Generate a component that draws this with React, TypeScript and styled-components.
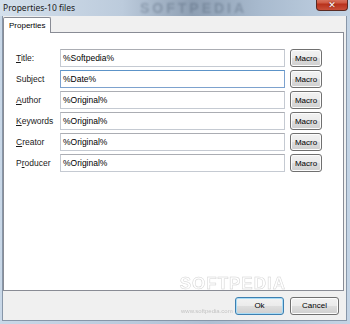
import React from 'react';
import styled, { createGlobalStyle } from 'styled-components';

const GlobalStyle = createGlobalStyle`
  html, body {
    margin: 0;
    padding: 0;
    background: #ffffff;
  }
  * {
    box-sizing: border-box;
  }
`;

const Window = styled.div`
  position: relative;
  width: 350px;
  height: 324px;
  display: flex;
  flex-direction: column;
  overflow: hidden;
  background: linear-gradient(90deg, #c9d8e8 0%, #b8c9dc 40%, #aebfd3 60%, #c4d4e5 100%);
  font-family: 'Liberation Sans', Arial, sans-serif;
`;

const TitleBar = styled.div`
  position: relative;
  height: 16px;
  flex-shrink: 0;
  display: flex;
  align-items: center;
  padding-left: 3px;
  background: linear-gradient(90deg, #d4e0ec 0%, #bccbdc 35%, #8e9fb3 55%, #a9bbcf 75%, #c2d2e3 100%);
`;

const TitleText = styled.span`
  font-family: 'Noto Sans', 'Open Sans', sans-serif;
  font-size: 8.5px;
  color: #1a1a1a;
  margin-top: -2px;
`;

const TitleWatermark = styled.span`
  position: absolute;
  left: 140px;
  top: 1px;
  font-family: 'Liberation Sans', Arial, sans-serif;
  font-weight: bold;
  font-size: 14px;
  line-height: 14px;
  letter-spacing: 3px;
  color: #3c4d62;
  opacity: 0.3;
  filter: blur(0.8px);
`;

const CloseButton = styled.div`
  position: absolute;
  right: 2px;
  top: -3px;
  width: 32px;
  height: 14px;
  border: 1px solid #5a2a22;
  border-top: none;
  border-radius: 0 0 4px 4px;
  background: linear-gradient(180deg, #e08a78 0%, #cf5a43 45%, #b8321c 55%, #c9503a 100%);
  display: flex;
  align-items: center;
  justify-content: center;
  padding-top: 2px;
  color: #ffffff;
  font-family: 'DejaVu Sans', sans-serif;
  font-weight: bold;
  font-size: 9px;
  text-shadow: 0 0 2px #5a1a10;
`;

const Client = styled.div`
  flex: 1;
  margin: 0 3px 3px 2px;
  border: 1px solid #8796a8;
  border-top: none;
  background: #f0f0f0;
  display: flex;
  flex-direction: column;
  padding: 1px 2px 0 0;
`;

const TabStrip = styled.div`
  height: 15px;
  display: flex;
  align-items: flex-end;
  position: relative;
  z-index: 1;
`;

const Tab = styled.div`
  height: 16px;
  margin-bottom: -1px;
  padding: 0 5px;
  display: flex;
  align-items: center;
  background: #ffffff;
  border: 1px solid #898c95;
  border-bottom: none;
  border-radius: 2px 2px 0 0;
  font-size: 8px;
  color: #000000;
`;

const Panel = styled.div`
  flex: 1;
  background: #ffffff;
  border: 1px solid #898c95;
  padding: 16px 0 0 12px;
`;

const FieldGrid = styled.div`
  display: grid;
  grid-template-columns: 39px 225px 32px;
  grid-auto-rows: 18px;
  column-gap: 5px;
  row-gap: 3px;
  align-items: center;
`;

const Label = styled.label`
  font-size: 8.5px;
  color: #1a1a1a;

  u {
    text-decoration: underline;
    text-underline-offset: 1px;
  }
`;

const Field = styled.div<{ focused?: boolean }>`
  height: 18px;
  border: 1px solid ${({ focused }) => (focused ? '#7da2ce' : '#c5cad2')};
  border-top-color: ${({ focused }) => (focused ? '#5c93c8' : '#abadb3')};
  background: #ffffff;
  display: flex;
  align-items: center;
  padding-left: 2px;
  font-size: 8.5px;
  color: #000000;
`;

const Button = styled.button<{ primary?: boolean }>`
  height: 18px;
  padding: 0;
  border: 1px solid ${({ primary }) => (primary ? '#3c7fb1' : '#707070')};
  border-radius: 3px;
  background: linear-gradient(180deg, #f2f2f2 0%, #ebebeb 48%, #dddddd 52%, #cfcfcf 100%);
  box-shadow: inset 0 0 0 1px ${({ primary }) => (primary ? '#a9dcf6' : '#fcfcfc')};
  font-family: 'Liberation Sans', Arial, sans-serif;
  font-size: 8px;
  color: #000000;
`;

const Footer = styled.div`
  height: 29px;
  display: flex;
  align-items: center;
  justify-content: flex-end;
  gap: 6px;
  padding: 0 5px 0 0;
  position: relative;
`;

const FooterButton = styled(Button)`
  width: 49px;
`;

const Watermark = styled.div`
  position: absolute;
  right: 58px;
  top: -16px;
  font-family: 'Liberation Sans', Arial, sans-serif;
  font-weight: bold;
  font-size: 17px;
  line-height: 17px;
  letter-spacing: 1px;
  color: #ffffff;
  -webkit-text-stroke: 0.5px #c8c8c8;
  opacity: 0.8;
`;

const WatermarkSmall = styled.div`
  position: absolute;
  left: 178px;
  top: 17px;
  font-size: 6px;
  color: #b0b0b0;
  opacity: 0.7;
`;

const fields = [
  { label: 'Title:', key: 0, value: '%Softpedia%' },
  { label: 'Subject', key: -1, value: '%Date%', focused: true },
  { label: 'Author', key: 0, value: '%Original%' },
  { label: 'Keywords', key: 0, value: '%Original%' },
  { label: 'Creator', key: 0, value: '%Original%' },
  { label: 'Producer', key: 1, value: '%Original%' },
];

const renderLabel = (text: string, index: number) => {
  if (index < 0) return text;
  return (
    <>
      {text.slice(0, index)}
      <u>{text[index]}</u>
      {text.slice(index + 1)}
    </>
  );
};

export default function App() {
  return (
    <>
      <GlobalStyle />
      <Window>
        <TitleBar>
          <TitleText>Properties-10 files</TitleText>
          <TitleWatermark>SOFTPEDIA</TitleWatermark>
          <CloseButton>✕</CloseButton>
        </TitleBar>
        <Client>
          <TabStrip>
            <Tab>Properties</Tab>
          </TabStrip>
          <Panel>
            <FieldGrid>
              {fields.map((f) => (
                <React.Fragment key={f.label}>
                  <Label>{renderLabel(f.label, f.key)}</Label>
                  <Field focused={f.focused}>{f.value}</Field>
                  <Button>Macro</Button>
                </React.Fragment>
              ))}
            </FieldGrid>
          </Panel>
          <Footer>
            <Watermark>SOFTPEDIA</Watermark>
            <WatermarkSmall>www.softpedia.com</WatermarkSmall>
            <FooterButton primary>Ok</FooterButton>
            <FooterButton>Cancel</FooterButton>
          </Footer>
        </Client>
      </Window>
    </>
  );
}
